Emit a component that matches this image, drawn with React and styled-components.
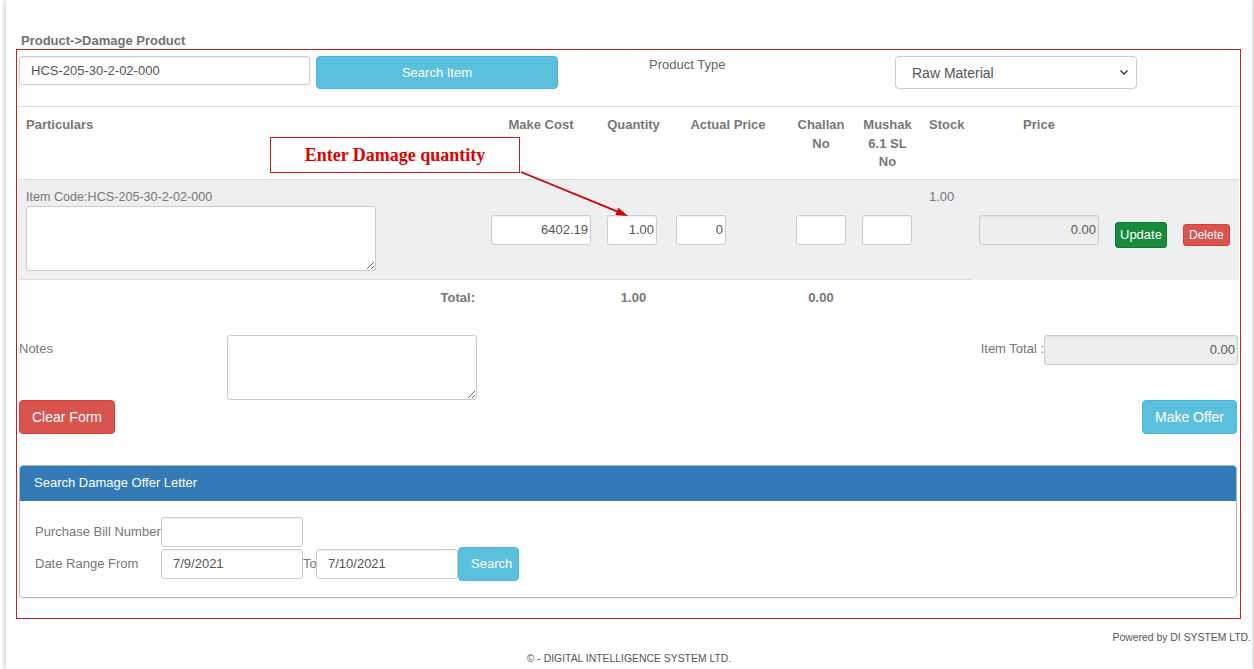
import React from "react";
import styled, { createGlobalStyle, css } from "styled-components";

const Global = createGlobalStyle`
    body {
        margin: 0;
        background: #fff;
        font-family: "Liberation Sans", Arial, sans-serif;
        font-size: 13px;
        color: #555;
    }
    * { box-sizing: border-box; }
`;

const Sheet = styled.div`
    margin-left: 6px;
    width: 1246px;
    min-height: 100vh;
    padding-top: 33px;
    background: #fff;
    box-shadow: 0 0 6px rgba(0, 0, 0, .28);
`;

const Title = styled.div`
    padding-left: 15px;
    line-height: 16px;
    font-weight: bold;
    color: #727272;
`;

const Frame = styled.div`
    margin: 0 11px 0 10px;
    border: 1px solid #c62121;
    padding: 6px 1px 20px 1px;
`;

const TopBar = styled.div`
    display: flex;
    align-items: flex-start;
    height: 50px;
`;

const Field = styled.input`
    width: ${({ $w }) => $w}px;
    height: ${({ $h }) => $h || 30}px;
    border: 1px solid #ccc;
    border-radius: 3px;
    padding: ${({ $right }) => ($right ? "0 2px 0 4px" : "0 11px")};
    text-align: ${({ $right }) => ($right ? "right" : "left")};
    font: 13px "Liberation Sans", Arial, sans-serif;
    color: #555;
    background: ${({ $muted }) => ($muted ? "#eee" : "#fff")};
    box-shadow: inset 0 1px 1px rgba(0, 0, 0, .06);
    outline: none;
`;

const btnColors = {
    info: css`background: #5bc0de; border-color: #46b8da;`,
    danger: css`background: #d9534f; border-color: #d43f3a;`,
    success: css`background: #178a3c; border-color: #137533;`,
};

const Button = styled.button`
    ${({ $kind }) => btnColors[$kind]}
    border-width: 1px;
    border-style: solid;
    border-radius: ${({ $small }) => ($small ? 3 : 4)}px;
    color: #fff;
    font-family: "Liberation Sans", Arial, sans-serif;
    font-size: ${({ $fs }) => $fs || 13}px;
    height: ${({ $h }) => $h || 34}px;
    width: ${({ $w }) => ($w ? `${$w}px` : "auto")};
    padding: 0 ${({ $px }) => ($px ?? 12)}px;
    margin-top: ${({ $mt }) => $mt || 0}px;
    cursor: pointer;
`;

const TypeLabel = styled.div`
    margin: 0 0 0 91px;
    line-height: 18px;
    color: #666;
`;

const Select = styled.div`
    margin: 0 102px 0 auto;
    width: 242px;
    height: 33px;
    border: 1px solid #ccc;
    border-radius: 4px;
    display: flex;
    align-items: center;
    justify-content: space-between;
    padding: 0 7px 0 16px;
    font-size: 14px;
    color: #555;
`;

const TableWrap = styled.div`
    position: relative;
`;

const Grid = styled.div`
    display: grid;
    grid-template-columns: 465px 116px 69px 120px 66px 67px 50px 136px 68px 1fr;
    border-top: 1px solid #ddd;
`;

const Head = styled.div`
    padding: 9px 8px 7px;
    line-height: 18.5px;
    font-weight: bold;
    color: #777;
    text-align: ${({ $left }) => ($left ? "left" : "center")};
    border-bottom: 1px solid #ddd;
    height: 73px;
`;

const Cell = styled.div`
    background: #eeeff1;
    padding: 8px;
    display: flex;
    flex-direction: ${({ $stack }) => ($stack ? "column" : "row")};
    align-items: ${({ $top }) => ($top ? "flex-start" : "center")};
    line-height: 18px;
    color: #777;
    border-bottom: 1px solid ${({ $line }) => ($line ? "#ddd" : "#eeeff1")};
`;

const Sum = styled.div`
    padding: 9px 8px 7px;
    line-height: 18.5px;
    font-weight: bold;
    color: #777;
    text-align: ${({ $align }) => $align || "center"};
`;

const Area = styled.textarea`
    width: ${({ $w }) => $w}px;
    height: 65px;
    border: 1px solid #ccc;
    border-radius: 3px;
    background: #fff;
    resize: both;
    font: 13px "Liberation Sans", Arial, sans-serif;
    outline: none;
`;

const Callout = styled.div`
    position: absolute;
    left: 252px;
    top: 31px;
    width: 250px;
    height: 36px;
    border: 1px solid #c41a1a;
    background: #fff;
    display: flex;
    align-items: center;
    justify-content: center;
    font: bold 18px "Liberation Serif", "Times New Roman", serif;
    color: #e00000;
`;

const Arrow = styled.svg`
    position: absolute;
    left: 500px;
    top: 63px;
`;

const NotesRow = styled.div`
    display: flex;
    align-items: flex-start;
    margin-top: 20px;
    padding-left: 1px;
`;

const Label = styled.div`
    width: ${({ $w }) => ($w ? `${$w}px` : "auto")};
    line-height: 18px;
    padding-top: ${({ $pt }) => $pt || 0}px;
    color: #777;
    margin-left: ${({ $auto }) => ($auto ? "auto" : "0")};
`;

const ActionRow = styled.div`
    display: flex;
    justify-content: space-between;
    padding: 0 2px 0 1px;
`;

const Panel = styled.div`
    margin: 31px 2px 0 1px;
    border: 1px solid #a9bccf;
    border-radius: 4px;
    overflow: hidden;
    box-shadow: 0 1px 1px rgba(0, 0, 0, .05);
`;

const PanelHead = styled.div`
    background: #337ab7;
    border-bottom: 1px solid #337ab7;
    color: #fff;
    height: 36px;
    line-height: 36px;
    padding-left: 15px;
    margin: -1px -1px 0;
`;

const PanelBody = styled.div`
    padding: 16px 15px 16px;
    display: flex;
    flex-direction: column;
`;

const FormLine = styled.div`
    display: flex;
    align-items: center;
`;

const Small = styled.span`
    width: ${({ $w }) => $w}px;
    color: #777;
`;

const Powered = styled.div`
    margin-top: 13px;
    padding-right: 1px;
    text-align: right;
    font-size: 10.4px;
    line-height: 12px;
    color: #555;
`;

const Copy = styled.div`
    margin-top: 9px;
    text-align: center;
    font-size: 10.4px;
    line-height: 12px;
    color: #555;
`;

const Chevron = () => (
    <svg width="10" height="7" viewBox="0 0 10 7">
        <path d="M1.5 1.5 L5 5 L8.5 1.5" fill="none" stroke="#333" strokeWidth="1.4" />
    </svg>
);

const heads = ["Make Cost", "Quantity", "Actual Price", "Challan No", "Mushak 6.1 SL No", "Stock", "Price", "", ""];

export default function App() {
    return (
        <>
            <Global />
            <Sheet>
                <Title>Product-&gt;Damage Product</Title>
                <Frame>
                    <TopBar>
                        <Field $w={291} $h={29} style={{ marginLeft: 1 }} value="HCS-205-30-2-02-000" readOnly />
                        <Button $kind="info" $w={242} $h={33} style={{ marginLeft: 6 }}>Search Item</Button>
                        <TypeLabel>Product Type</TypeLabel>
                        <Select>Raw Material <Chevron /></Select>
                    </TopBar>

                    <TableWrap>
                        <Grid>
                            <Head $left>Particulars</Head>
                            {heads.map((h, i) => (
                                <Head key={i}>
                                    {h === "Challan No" ? <>Challan<br />No</> : h === "Mushak 6.1 SL No" ? <>Mushak<br />6.1 SL<br />No</> : h}
                                </Head>
                            ))}

                            <Cell $stack $top $line>
                                <div style={{ fontSize: 12.6 }}>Item Code:HCS-205-30-2-02-000</div>
                                <Area $w={350} />
                            </Cell>
                            <Cell $line><Field $w={100} $right value="6402.19" readOnly /></Cell>
                            <Cell $line><Field $w={50} $right value="1.00" readOnly /></Cell>
                            <Cell $line><Field $w={50} $right value="0" readOnly /></Cell>
                            <Cell $line><Field $w={50} value="" readOnly /></Cell>
                            <Cell $line><Field $w={50} value="" readOnly /></Cell>
                            <Cell $top $line>1.00</Cell>
                            <Cell><Field $w={120} $right $muted value="0.00" readOnly /></Cell>
                            <Cell><Button $kind="success" $h={26} $px={4} $mt={10} $small>Update</Button></Cell>
                            <Cell><Button $kind="danger" $h={22} $px={5} $fs={12} $mt={10} $small>Delete</Button></Cell>

                            <Sum $align="right">Total:</Sum>
                            <Sum />
                            <Sum>1.00</Sum>
                            <Sum />
                            <Sum>0.00</Sum>
                            <Sum /><Sum /><Sum /><Sum /><Sum />
                        </Grid>

                        <Callout>Enter Damage quantity</Callout>
                        <Arrow width="120" height="52" viewBox="0 0 120 52">
                            <line x1="3" y1="3" x2="99" y2="42.4" stroke="#d40000" strokeWidth="1.8" />
                            <polygon points="110,47 97.4,46.1 100.4,38.7" fill="#d40000" />
                        </Arrow>
                    </TableWrap>

                    <NotesRow>
                        <Label $w={208} $pt={5}>Notes</Label>
                        <Area $w={250} />
                        <Label $auto $pt={5}>Item Total :</Label>
                        <Field $w={194} $right $muted style={{ marginRight: 1 }} value="0.00" readOnly />
                    </NotesRow>

                    <ActionRow>
                        <Button $kind="danger" $fs={14}>Clear Form</Button>
                        <Button $kind="info" $fs={14}>Make Offer</Button>
                    </ActionRow>

                    <Panel>
                        <PanelHead>Search Damage Offer Letter</PanelHead>
                        <PanelBody>
                            <FormLine>
                                <Small $w={126}>Purchase Bill Number</Small>
                                <Field $w={142} value="" readOnly />
                            </FormLine>
                            <FormLine>
                                <Small $w={126}>Date Range From</Small>
                                <Field $w={142} value="7/9/2021" readOnly />
                                <Small $w={13}>To</Small>
                                <Field $w={142} value="7/10/2021" readOnly />
                                <Button $kind="info" $w={61}>Search</Button>
                            </FormLine>
                        </PanelBody>
                    </Panel>
                </Frame>
                <Powered>Powered by DI SYSTEM LTD.</Powered>
                <Copy>&copy; - DIGITAL INTELLIGENCE SYSTEM LTD.</Copy>
            </Sheet>
        </>
    );
}
